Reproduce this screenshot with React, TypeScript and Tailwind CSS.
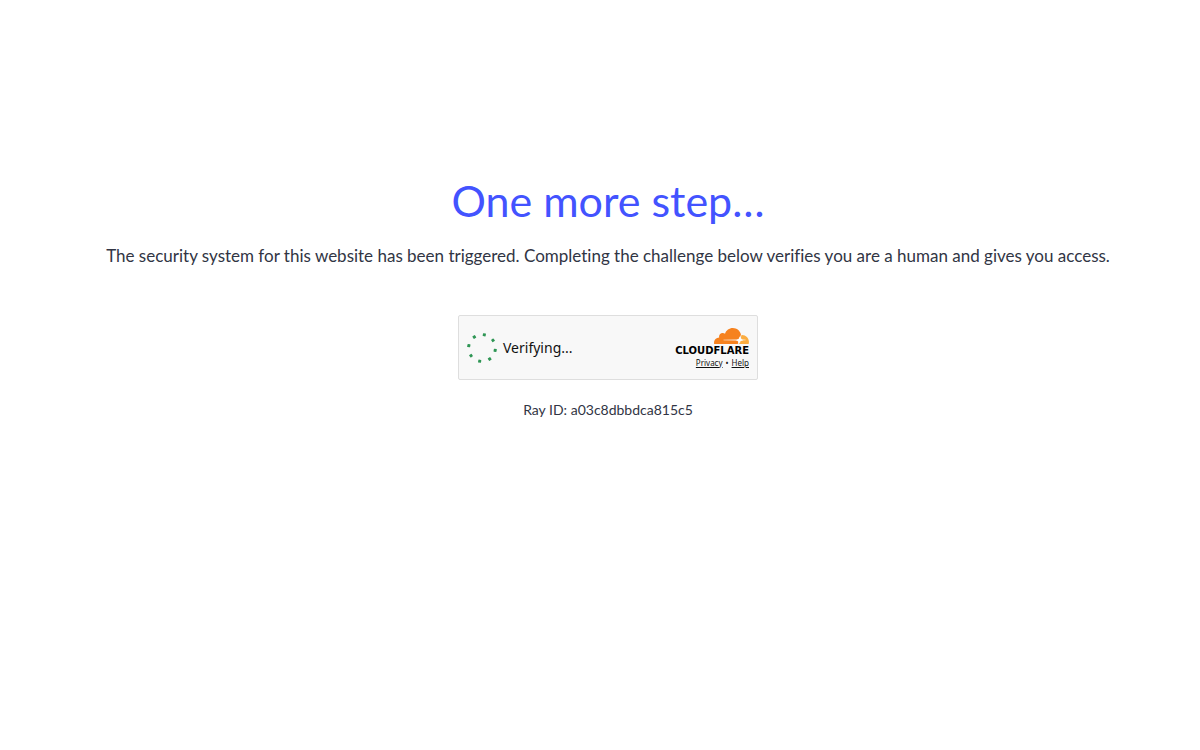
const spinnerAngles = [10, 55, 100, 145, 190, 235, 280, 325];

function Spinner() {
  return (
    <svg className="size-[30px] shrink-0" viewBox="0 0 30 30" aria-hidden="true">
      {spinnerAngles.map((angle) => (
        <rect
          key={angle}
          x="13.5"
          y="0.1"
          width="3"
          height="3"
          rx="0.5"
          fill="#2f9655"
          transform={`rotate(${angle} 15 15)`}
        />
      ))}
    </svg>
  );
}

function CloudMark() {
  return (
    <svg className="h-4 w-[35px]" viewBox="0 6.5 24 11" aria-hidden="true">
      <path
        fill="#f6821f"
        d="M16.5088 16.8447c.1475-.5068.0908-.9707-.1553-1.3154-.2246-.3164-.6045-.499-1.0615-.5205l-8.6592-.1123a.1559.1559 0 0 1-.1333-.0713c-.0283-.042-.0351-.0986-.021-.1553.0278-.084.1123-.1484.2036-.1562l8.7359-.1123c1.0351-.0489 2.1601-.8868 2.5537-1.9136l.499-1.3013c.0215-.0561.0293-.1128.0147-.168-.5625-2.5463-2.835-4.4453-5.5499-4.4453-2.5039 0-4.6284 1.6177-5.3876 3.8614-.4927-.3658-1.1187-.5625-1.794-.499-1.2026.119-2.1665 1.083-2.2861 2.2856-.0283.31-.0069.6128.0635.894C1.5683 13.171 0 14.7754 0 16.752c0 .1748.0142.3515.0352.5273.0141.083.0844.1475.1689.1475h15.9814c.0909 0 .1758-.0645.2032-.1553z"
      />
      <path
        fill="#fbad41"
        d="M19.2656 11.2813c-.0771 0-.1611 0-.2383.0112-.0566 0-.1054.0415-.127.0976l-.3378 1.1744c-.1475.5068-.0918.9707.1543 1.3164.2256.3164.6055.498 1.0625.5195l1.8437.1133c.0557 0 .1055.0263.1329.0703.0283.043.0351.1074.0214.1562-.0283.084-.1132.1485-.204.1553l-1.921.1123c-1.041.0488-2.1582.8867-2.5527 1.914l-.1406.3585c-.0283.0713.0215.1416.0986.1416h6.5977c.0771 0 .1474-.0489.169-.126.1122-.4082.1757-.837.1757-1.2803 0-2.6025-2.125-4.727-4.7344-4.727"
      />
      <path fill="#fff" d="M17.6 12.2l.6 2.1 2 .6-2 .6-.6 2-.6-2-2-.6 2-.6z" />
    </svg>
  );
}

export default function App() {
  return (
    <main className="flex flex-col items-center bg-white pt-[177px] pl-4 text-center font-['Lato','Noto_Sans',sans-serif] text-[#313544] [font-variant-ligatures:none]">
      <h1 className="text-[43px] leading-[48px] font-normal text-[#4353ff]">One more step…</h1>
      <p className="mt-[19px] text-[17px] leading-6">
        The security system for this website has been triggered. Completing the challenge below
        verifies you are a human and gives you access.
      </p>
      <section
        aria-label="Security check"
        className="mt-[47px] flex h-[65px] w-[300px] items-center justify-between rounded-[2px] border border-[#dedede] bg-[#f8f8f8] px-2 font-['Noto_Sans',sans-serif] text-[#111111]"
      >
        <div role="status" className="flex items-center gap-1.5 text-sm">
          <Spinner />
          <span>Verifying...</span>
        </div>
        <div className="flex flex-col items-end pt-px">
          <CloudMark />
          <span className="font-['DejaVu_Sans',sans-serif] text-[10px] leading-[13px] font-bold text-black">
            CLOUDFLARE
          </span>
          <div className="flex gap-[3px] text-[8px] leading-3">
            <a href="#privacy" className="underline">
              Privacy
            </a>
            <span aria-hidden="true">•</span>
            <a href="#help" className="underline">
              Help
            </a>
          </div>
        </div>
      </section>
      <p className="mt-5 text-sm leading-5">Ray ID: a03c8dbbdca815c5</p>
    </main>
  );
}
